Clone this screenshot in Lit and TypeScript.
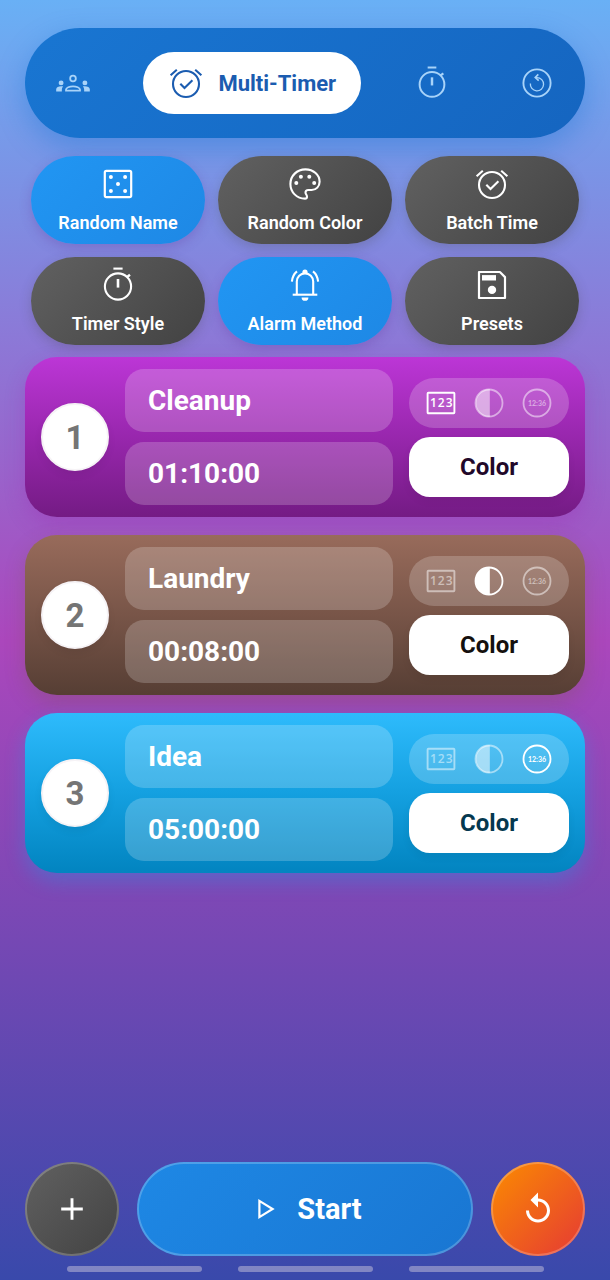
import { LitElement, html, svg, css } from "lit";
import { customElement, property, state } from "lit/decorators.js";
import { classMap } from "lit/directives/class-map.js";

const icons = {
  groups: svg`
    <g fill="none" stroke="currentColor" stroke-width="1.9">
      <circle cx="18" cy="13.2" r="3"/>
      <path d="M10.6 26.1v-1.2c0-2 3.8-3.4 7.4-3.4s7.4 1.4 7.4 3.4v1.2z"/>
    </g>
    <g fill="currentColor">
      <circle cx="5.4" cy="17.9" r="2.6"/>
      <circle cx="30.6" cy="17.9" r="2.6"/>
      <path d="M.2 27v-2.3c0-2.1 2.5-3.2 5.2-3.2.8 0 1.5.1 2.2.3-.9.9-1.4 1.9-1.4 3V27z"/>
      <path d="M35.8 27v-2.3c0-2.1-2.5-3.2-5.2-3.2-.8 0-1.5.1-2.2.3.9.9 1.4 1.9 1.4 3V27z"/>
    </g>`,
  alarm: svg`
    <g fill="none" stroke="currentColor" stroke-width="2.1">
      <circle cx="18" cy="19" r="13"/>
      <path d="M2.6 10.2L8.8 4.8M33.4 10.2L27.2 4.8"/>
      <path d="M12.3 18.8l4.2 4.3L24.4 15.2"/>
    </g>`,
  stopwatch: svg`
    <g fill="none" stroke="currentColor" stroke-width="2.1">
      <circle cx="18" cy="19.5" r="13.1"/>
      <path d="M13.4 1.6h9.2"/>
      <path d="M26.8 10.2L30 7.8" stroke-width="2.4"/>
      <path d="M18 12v8.6" stroke-width="2.6"/>
    </g>`,
  restart: svg`
    <g fill="none" stroke="currentColor" stroke-width="2">
      <circle cx="18" cy="18" r="14.4"/>
      <path d="M11 18.5a7 7 0 1 0 7-6.2h-1.6" stroke-width="1.4"/>
      <path d="M19.4 8.9l-3.2 3.3 3.6 3.2" stroke-width="1.8"/>
    </g>`,
  dice: svg`
    <rect x="4.8" y="4.8" width="26.4" height="26.4" rx="1.6" fill="none" stroke="currentColor" stroke-width="2.2"/>
    <g fill="currentColor">
      <circle cx="10.9" cy="10.9" r="2"/><circle cx="25.1" cy="10.9" r="2"/>
      <circle cx="18" cy="18" r="2"/>
      <circle cx="10.9" cy="25.1" r="2"/><circle cx="25.1" cy="25.1" r="2"/>
    </g>`,
  palette: svg`
    <path fill="none" stroke="currentColor" stroke-width="2.1" d="M18 32.6C9.8 32.6 3.4 26.2 3.4 18S9.9 3.4 18.4 3.4C26.6 3.4 32.6 8.9 32.6 15.7C32.6 20.4 29.2 24 24.6 24h-3.2c-1.8 0-2.9 1.1-2.9 2.5 0 1.8 1.5 2.3 1.5 4.2 0 1.2-.7 1.9-2 1.9z"/>
    <g fill="currentColor">
      <circle cx="9.3" cy="17" r="2"/><circle cx="13.9" cy="10.7" r="2"/>
      <circle cx="22.3" cy="10.7" r="2"/><circle cx="27.2" cy="17" r="2"/>
    </g>`,
  bell: svg`
    <g fill="none" stroke="currentColor" stroke-width="2.1">
      <path d="M5.7 27.7h24.6"/>
      <path d="M9.8 27.7V14.6a8.2 8.2 0 0 1 16.4 0v13.1"/>
      <path d="M4.9 14.6C5.3 10.4 7 6.8 10 4.4M31.1 14.6C30.7 10.4 29 6.8 26 4.4"/>
    </g>
    <path fill="currentColor" d="M14.6 30.4h6.8a3.4 3.4 0 0 1-6.8 0zM15.4 6.6V5a2.6 2.6 0 0 1 5.2 0v1.6z"/>`,
  save: svg`
    <path fill="none" stroke="currentColor" stroke-width="2.2" stroke-linejoin="round" d="M5 5h20.9L31 10.1V31H5z"/>
    <path fill="currentColor" d="M8 8.1h14v5.4H8z"/>
    <circle cx="18" cy="22.9" r="4.2" fill="currentColor"/>`,
  digits: svg`
    <rect x="4.6" y="7.7" width="26.8" height="20.6" rx=".8" fill="none" stroke="currentColor" stroke-width="1.9"/>
    <g class="numeral">
      <text x="10.4" y="22.4">1</text><text x="18.2" y="22.4">2</text><text x="26.2" y="22.4">3</text>
    </g>`,
  contrast: svg`
    <circle cx="18" cy="18" r="13.5" fill="none" stroke="currentColor" stroke-width="1.8"/>
    <path fill="currentColor" d="M18.8 4A14 14 0 0 0 18.8 32z"/>`,
  clock: svg`
    <circle cx="18" cy="18" r="13.5" fill="none" stroke="currentColor" stroke-width="1.8"/>
    <text class="tiny" x="18" y="20.8">12:36</text>`,
  plus: svg`<path fill="none" stroke="currentColor" stroke-width="2.9" d="M18 7.2v21.6M7.2 18h21.6"/>`,
  play: svg`<path fill="none" stroke="currentColor" stroke-width="2.2" d="M11.4 9.9v16.2L24.6 18z"/>`,
  replay: svg`<path fill="currentColor" transform="scale(1.5)" d="M12 5V1L7 6l5 5V7c3.31 0 6 2.69 6 6s-2.69 6-6 6-6-2.69-6-6H4c0 4.42 3.58 8 8 8s8-3.58 8-8-3.58-8-8-8z"/>`,
};

type IconName = keyof typeof icons;

@customElement("app-icon")
export class AppIcon extends LitElement {
  @property() name: IconName = "plus";

  static styles = css`
    :host { display: block; width: 36px; height: 36px; }
    svg { display: block; width: 100%; height: 100%; }
    text { fill: currentColor; text-anchor: middle; }
    .numeral { font-family: "Open Sans", sans-serif; font-size: 12px; font-weight: 600; }
    .tiny { font-family: Lato, sans-serif; font-size: 7px; font-weight: 700; }
  `;

  render() {
    return html`<svg viewBox="0 0 36 36" aria-hidden="true">${icons[this.name]}</svg>`;
  }
}

type Face = "digits" | "contrast" | "clock";

interface Timer {
  name: string;
  time: string;
  face: Face;
  tone: "purple" | "brown" | "blue";
}

const faces: { id: Face; label: string }[] = [
  { id: "digits", label: "Digits" },
  { id: "contrast", label: "Disc" },
  { id: "clock", label: "Clock" },
];

@customElement("timer-card")
export class TimerCard extends LitElement {
  @property({ type: Number }) index = 1;
  @property({ attribute: false }) timer!: Timer;
  @state() private face?: Face;

  static styles = css`
    :host { display: block; font-family: Roboto, sans-serif; }
    .card {
      display: grid;
      grid-template-columns: 68px minmax(0, 1fr) 160px;
      align-items: center;
      gap: 16px;
      padding: 12px 16px;
      border-radius: 32px;
    }
    .purple {
      background: linear-gradient(#bc36d6, #9827ad 50%, #741b84);
      box-shadow: 0 8px 20px rgba(156, 39, 176, 0.3);
      --ink: #220829;
    }
    .brown {
      background: linear-gradient(#986b5b, #785548 50%, #563e34);
      box-shadow: 0 8px 20px rgba(121, 85, 72, 0.3);
      --ink: #14100e;
    }
    .blue {
      background: linear-gradient(#2ebbfc, #14a0e0 50%, #0284c0);
      box-shadow: 0 8px 20px rgba(3, 169, 244, 0.3);
      --ink: #04384f;
    }
    .number {
      display: grid;
      place-items: center;
      height: 68px;
      box-sizing: border-box;
      border: 2px solid #f6f3f6;
      border-radius: 50%;
      background: #fff;
      color: #757575;
      font-size: 33px;
      font-weight: 700;
      box-shadow: 0 4px 8px rgba(0, 0, 0, 0.06);
    }
    .fields { display: grid; gap: 10px; }
    .field {
      width: 100%;
      height: 63px;
      box-sizing: border-box;
      padding: 0 23px;
      border: 0;
      border-radius: 19px;
      outline: none;
      background: rgba(255, 255, 255, 0.2);
      color: #fff;
      font: 700 28px Roboto, sans-serif;
    }
    .side { display: grid; gap: 9px; }
    .faces {
      display: flex;
      justify-content: center;
      margin: 0;
      padding: 0 8px;
      border: 0;
      border-radius: 25px;
      background: rgba(255, 255, 255, 0.2);
    }
    .face {
      display: grid;
      place-items: center;
      flex: 1;
      height: 50px;
      color: rgba(255, 255, 255, 0.5);
      cursor: pointer;
    }
    .face.on { color: #fff; }
    .face > * { grid-area: 1 / 1; }
    .radio { appearance: none; width: 36px; height: 36px; margin: 0; }
    .color {
      height: 60px;
      border: 0;
      border-radius: 21px;
      background: #fff;
      color: var(--ink);
      font: 700 24px Roboto, sans-serif;
      cursor: pointer;
      box-shadow: 0 4px 8px rgba(0, 0, 0, 0.06);
    }
  `;

  render() {
    const t = this.timer;
    const current = this.face ?? t.face;
    return html`
      <article class="card ${t.tone}">
        <div class="number">${this.index}</div>
        <div class="fields">
          <input class="field" type="text" aria-label="Name" .value=${t.name}>
          <input class="field" type="text" aria-label="Time" .value=${t.time}>
        </div>
        <div class="side">
          <fieldset class="faces" aria-label="Face">
            ${faces.map((f) => html`
              <label class=${classMap({ face: true, on: f.id === current })}>
                <input class="radio" type="radio" name="face" aria-label=${f.label}
                  .checked=${f.id === current} @change=${() => (this.face = f.id)}>
                <app-icon name=${f.id}></app-icon>
              </label>`)}
          </fieldset>
          <button class="color" type="button">Color</button>
        </div>
      </article>`;
  }
}

const tools: { icon: IconName; label: string; on?: boolean }[] = [
  { icon: "dice", label: "Random Name", on: true },
  { icon: "palette", label: "Random Color" },
  { icon: "alarm", label: "Batch Time" },
  { icon: "stopwatch", label: "Timer Style" },
  { icon: "bell", label: "Alarm Method", on: true },
  { icon: "save", label: "Presets" },
];

const timers: Timer[] = [
  { name: "Cleanup", time: "01:10:00", face: "digits", tone: "purple" },
  { name: "Laundry", time: "00:08:00", face: "contrast", tone: "brown" },
  { name: "Idea", time: "05:00:00", face: "clock", tone: "blue" },
];

@customElement("app-root")
export class AppRoot extends LitElement {
  static styles = css`
    :host {
      display: flex;
      flex-direction: column;
      box-sizing: border-box;
      min-height: 100vh;
      padding: 28px 25px 8px;
      background: linear-gradient(#69b0f5, #ab47bc 50%, #3949ab);
      font-family: Roboto, sans-serif;
    }
    button { border: 0; margin: 0; font-family: inherit; cursor: pointer; }
    .tabs {
      display: flex;
      align-items: center;
      justify-content: space-between;
      height: 110px;
      box-sizing: border-box;
      padding: 0 13px;
      border-radius: 55px;
      background: linear-gradient(135deg, #1976d2, #1565c0);
      box-shadow: 0 10px 28px rgba(25, 118, 210, 0.4);
    }
    .tab {
      display: flex;
      align-items: center;
      justify-content: center;
      width: 70px;
      height: 62px;
      padding: 0;
      background: none;
      color: #a8d3f9;
    }
    .tab app-icon { width: 34px; height: 34px; }
    .tab.current {
      width: auto;
      gap: 14px;
      padding: 0 25px;
      border-radius: 31px;
      background: #fff;
      color: #1b5cb0;
      font-size: 22px;
      font-weight: 700;
    }
    .tab.current app-icon { width: 36px; height: 36px; }
    .tools {
      display: grid;
      grid-template-columns: repeat(3, 1fr);
      gap: 13px;
      padding: 18px 6px 12px;
    }
    .tool {
      display: flex;
      flex-direction: column;
      align-items: center;
      gap: 11px;
      height: 88px;
      padding: 10px 0 0;
      border-radius: 44px;
      background: linear-gradient(135deg, #616161, #424242);
      color: #fff;
      font-size: 18px;
      line-height: 20px;
      font-weight: 600;
      box-shadow: 0 4px 12px rgba(66, 66, 66, 0.25);
    }
    .tool.on {
      background: linear-gradient(135deg, #2196f3, #1e88e5);
      box-shadow: 0 4px 12px rgba(100, 60, 160, 0.3);
    }
    .list { display: grid; gap: 18px; }
    .actions {
      display: grid;
      grid-template-columns: 94px 1fr 94px;
      gap: 18px;
      margin-top: auto;
      padding-top: 24px;
    }
    .action {
      display: flex;
      align-items: center;
      justify-content: center;
      height: 94px;
      box-sizing: border-box;
      padding: 0;
      border-radius: 47px;
      border: 2px solid rgba(255, 255, 255, 0.22);
      background-origin: border-box;
      color: #fff;
    }
    .add { background-image: linear-gradient(135deg, #616161, #424242); }
    .start {
      gap: 13px;
      background-image: linear-gradient(135deg, #1e88e5, #1976d2);
      font-size: 29px;
      font-weight: 700;
    }
    .reset { background-image: linear-gradient(135deg, #fb8c00, #e53935); }
    .bars {
      display: flex;
      justify-content: center;
      gap: 36px;
      padding-top: 10px;
    }
    .bar {
      width: 135px;
      height: 6px;
      border-radius: 3px;
      background: rgba(200, 195, 220, 0.5);
    }
  `;

  render() {
    return html`
      <nav class="tabs" aria-label="Modes">
        <button class="tab" type="button" aria-label="Groups"><app-icon name="groups"></app-icon></button>
        <button class="tab current" type="button" aria-current="page">
          <app-icon name="alarm"></app-icon>Multi-Timer
        </button>
        <button class="tab" type="button" aria-label="Stopwatch"><app-icon name="stopwatch"></app-icon></button>
        <button class="tab" type="button" aria-label="Loop"><app-icon name="restart"></app-icon></button>
      </nav>
      <section class="tools" aria-label="Tools">
        ${tools.map((t) => html`
          <button type="button" class=${classMap({ tool: true, on: !!t.on })}>
            <app-icon name=${t.icon}></app-icon>${t.label}
          </button>`)}
      </section>
      <main class="list">
        ${timers.map((t, i) => html`<timer-card .index=${i + 1} .timer=${t}></timer-card>`)}
      </main>
      <footer class="actions">
        <button class="action add" type="button" aria-label="Add timer"><app-icon name="plus"></app-icon></button>
        <button class="action start" type="button"><app-icon name="play"></app-icon>Start</button>
        <button class="action reset" type="button" aria-label="Reset"><app-icon name="replay"></app-icon></button>
      </footer>
      <div class="bars"><span class="bar"></span><span class="bar"></span><span class="bar"></span></div>`;
  }
}
